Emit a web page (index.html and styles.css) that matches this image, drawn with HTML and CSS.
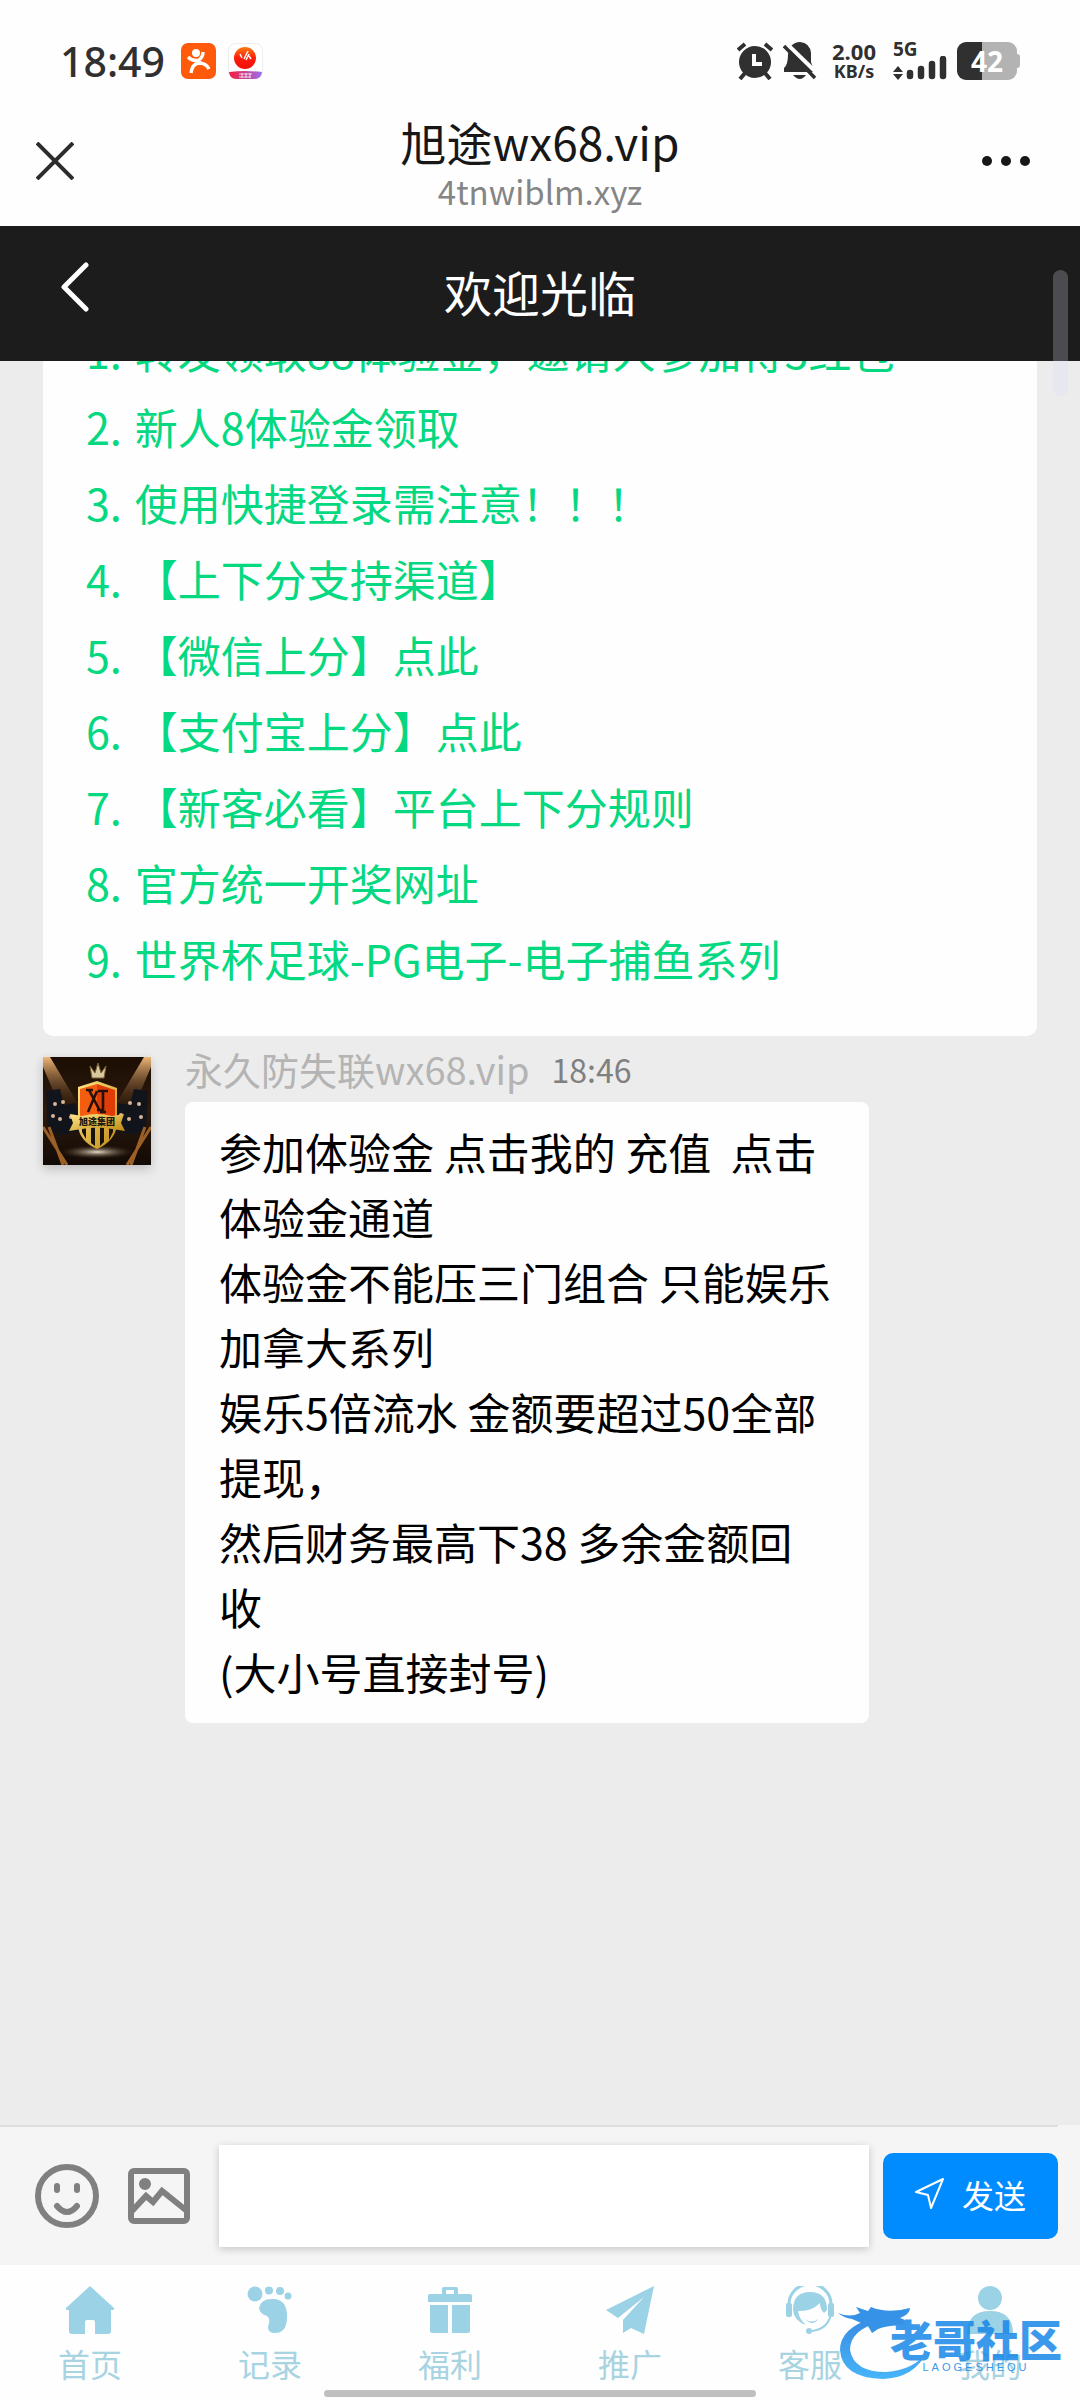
FILE: index.html
```html
<!DOCTYPE html>
<html lang="zh-CN">
<head>
<meta charset="utf-8">
<meta name="viewport" content="width=device-width, initial-scale=1">
<title>旭途wx68.vip</title>
<link rel="stylesheet" href="styles.css">
</head>
<body>
<div class="app">
  <div class="status">
    <time class="clock">18:49</time>
    <svg class="app-icon" viewBox="0 0 35 36" aria-hidden="true">
      <rect width="35" height="36" rx="7" fill="#ff5a0a"/>
      <circle cx="15" cy="10" r="4" fill="#fff"/>
      <path d="M7 14Q12 19 18 17Q22 14 22 9M14 17Q19 19 20 20M10 30Q11 21 18 20Q25 20 28 26" fill="none" stroke="#fff" stroke-width="3.4"/>
    </svg>
    <svg class="app-icon" viewBox="0 0 35 36" aria-hidden="true">
      <defs>
        <linearGradient id="ball" x1="0" y1="0" x2="0" y2="1"><stop offset="0" stop-color="#ff7a10"/><stop offset=".5" stop-color="#fb1c0c"/><stop offset="1" stop-color="#f01008"/></linearGradient>
        <linearGradient id="band"><stop offset="0" stop-color="#f51c3c"/><stop offset="1" stop-color="#9a70ee"/></linearGradient>
      </defs>
      <rect x=".5" y=".5" width="34" height="35" rx="7" fill="#fff" stroke="#ececf2"/>
      <circle cx="17" cy="15" r="11" fill="url(#ball)"/>
      <path d="M12 11l2 4M16 16l4-8M18 17l3-6M21 13l2 3" stroke="#fff" stroke-width="1.5"/>
      <path d="M1 29Q17 27 34 29Q33 36 27 36H8Q2 36 1 29z" fill="url(#band)"/>
      <path d="M11 31h13M11 34h12M14 30v5M18 30v5M22 30v5" stroke="#fff" stroke-opacity=".75"/>
    </svg>
    <div class="status-right">
      <svg class="alarm" viewBox="0 0 36 38" aria-hidden="true">
        <circle cx="18" cy="20" r="16" fill="#303030"/>
        <path d="M1 8l7-6M35 8l-7-6M8 31l-5 6M28 31l5 6" stroke="#303030" stroke-width="4"/>
        <path d="M17 12v10h8" fill="none" stroke="#fff" stroke-width="4"/>
      </svg>
      <svg class="bell" viewBox="0 0 34 38" aria-hidden="true">
        <path d="M8 4Q12 0 17 0Q27 1 28 11V20Q29 25 33 30H1V26Q5 23 5 12z" fill="#303030"/>
        <path d="M10 33h13q-6 8-13 0z" fill="#303030"/>
        <path d="M3 1L35 32" stroke="#fff" stroke-width="4"/>
        <path d="M1 4L32 36" stroke="#303030" stroke-width="3.5"/>
      </svg>
      <div class="speed"><span>2.00</span><span class="unit">KB/s</span></div>
      <div class="signal">
        <span>5G</span>
        <svg viewBox="0 0 54 24" aria-hidden="true">
          <path d="M0 16L5 10L10 16zM0 18L5 24L10 18z" fill="#303030"/>
          <path d="M17 17V20M28 13V20M39 8V20M50 3V20" stroke="#303030" stroke-width="6.5" stroke-linecap="round"/>
        </svg>
      </div>
      <div class="battery"><span>42</span></div>
    </div>
  </div>

  <header class="browser-bar">
    <button class="plain" aria-label="关闭"><svg width="38" height="38" viewBox="0 0 38 38"><path d="M1 1L37 37M37 1L1 37" stroke="#2c2c2c" stroke-width="4"/></svg></button>
    <div class="heading"><h1>旭途wx68.vip</h1><p>4tnwiblm.xyz</p></div>
    <button class="plain more" aria-label="更多"><svg width="48" height="10" viewBox="0 0 48 10" fill="#171717"><circle cx="5" cy="5" r="5"/><circle cx="24" cy="5" r="5"/><circle cx="43" cy="5" r="5"/></svg></button>
  </header>

  <div class="room-bar">
    <button class="plain" aria-label="返回"><svg width="30" height="50" viewBox="0 0 30 50"><path d="M26 3L4 25L26 47" fill="none" stroke="#fff" stroke-width="5" stroke-linecap="round" stroke-linejoin="round"/></svg></button>
    <h2>欢迎光临</h2>
    <i class="scroll-thumb"></i>
  </div>

  <main class="chat">
    <ul class="notices">
      <li><a href="#"><span>1.</span>转发领取88体验金，邀请人参加得3红包</a></li>
      <li><a href="#"><span>2.</span>新人8体验金领取</a></li>
      <li><a href="#"><span>3.</span>使用快捷登录需注意！！！</a></li>
      <li><a href="#"><span>4.</span>【上下分支持渠道】</a></li>
      <li><a href="#"><span>5.</span>【微信上分】点此</a></li>
      <li><a href="#"><span>6.</span>【支付宝上分】点此</a></li>
      <li><a href="#"><span>7.</span>【新客必看】平台上下分规则</a></li>
      <li><a href="#"><span>8.</span>官方统一开奖网址</a></li>
      <li><a href="#"><span>9.</span>世界杯足球-PG电子-电子捕鱼系列</a></li>
    </ul>
    <article class="message">
      <svg class="avatar" viewBox="0 0 108 108" role="img" aria-label="头像">
        <defs>
          <linearGradient id="beam" x1="0" y1="0" x2="0" y2="1"><stop offset="0" stop-color="#f0b878"/><stop offset="1" stop-color="#5a3418" stop-opacity="0"/></linearGradient>
          <radialGradient id="floor"><stop offset="0" stop-color="#e8dcc8"/><stop offset="1" stop-color="#3a2412" stop-opacity="0"/></radialGradient>
          <linearGradient id="bg" x1="0" y1="0" x2="0" y2="1"><stop offset="0" stop-color="#1c0e04"/><stop offset=".5" stop-color="#2c1a0c"/><stop offset="1" stop-color="#120a06"/></linearGradient>
          <linearGradient id="gold" x1="0" y1="0" x2="1" y2="1"><stop offset="0" stop-color="#ffe88a"/><stop offset="1" stop-color="#c08810"/></linearGradient>
        </defs>
        <rect width="108" height="108" fill="url(#bg)"/>
        <path d="M0 0H7L38 52H18L0 10zM108 0H101L70 52H90L108 10z" fill="url(#beam)"/>
        <path d="M3 34l14-2 4 16 12-2 4 28-20 4-12-6zM105 34l-14-2-4 16-12-2-4 28 20 4 12-6z" fill="#12141c"/>
        <path d="M0 70L24 108M6 70L20 108M108 70L84 108M102 70L88 108" stroke="#9c6026" stroke-width="3"/>
        <ellipse cx="54" cy="95" rx="38" ry="7" fill="url(#floor)"/>
        <g fill="#d8b496"><circle cx="12" cy="47" r="2"/><circle cx="20" cy="45" r="2"/><circle cx="10" cy="59" r="2"/><circle cx="17" cy="62" r="2"/><circle cx="28" cy="60" r="2"/><circle cx="96" cy="47" r="2"/><circle cx="87" cy="46" r="2"/><circle cx="98" cy="60" r="2"/><circle cx="86" cy="62" r="2"/><circle cx="78" cy="58" r="2"/></g>
        <path d="M49 21L47 9L52 16L55 6L58 16L63 9L61 21z" fill="#d8c8a0" stroke="#7c6230"/>
        <path d="M35 30L54 24L74 31V68Q72 84 54 92Q36 84 35 68z" fill="url(#gold)"/>
        <path d="M37 32L54 27V61H37z" fill="#f45c10"/><path d="M54 27L72 33V61H54z" fill="#e03c08"/>
        <path d="M46 33L57 54M54 34L45 55M43 33h7M54 53h5M55 34H65M60 34V55M57 55h6" fill="none" stroke="#28100a" stroke-width="2.6"/>
        <path d="M39 69h4v13l-4-7zM48 69h4v20l-4-3zM57 69h4v16l-4 4zM66 69h4v6l-4 8z" fill="#18120c"/>
        <path d="M27 57L39 59Q54 55 69 59L81 57L78 66L82 74L69 72Q54 69 39 72L26 74L30 66z" fill="url(#gold)"/>
        <text x="54" y="68" text-anchor="middle" class="avatar-text">旭途集团</text>
      </svg>
      <div class="message-body">
        <div class="meta"><span class="name">永久防失联wx68.vip</span><time>18:46</time></div>
        <p class="bubble">参加体验金 点击我的 充值&nbsp; 点击<br>体验金通道<br>体验金不能压三门组合 只能娱乐<br>加拿大系列<br>娱乐5倍流水 金额要超过50全部<br>提现，<br>然后财务最高下38 多余金额回<br>收<br>(大小号直接封号)</p>
      </div>
    </article>
  </main>

  <form class="composer">
    <button type="button" class="plain" aria-label="表情"><svg width="64" height="66" viewBox="0 0 64 66" fill="none" stroke="#808080" stroke-width="6"><circle cx="32" cy="33" r="29"/><path d="M22 23v4M42 23v4" stroke-linecap="round"/><path d="M22 43Q32 55 42 43" stroke-linecap="round"/></svg></button>
    <button type="button" class="plain picture" aria-label="图片"><svg width="62" height="56" viewBox="0 0 62 56" fill="none" stroke="#808080" stroke-width="6"><rect x="3" y="3" width="56" height="50" rx="3"/><circle cx="17" cy="16" r="3"/><path d="M4 43L18 28L25 34L34 23L59 43"/></svg></button>
    <input type="text" aria-label="输入消息">
    <button type="button" class="send"><svg width="30" height="32" viewBox="0 0 30 32"><path d="M1 14L28 1L16 30L13 17z" fill="none" stroke="#fff" stroke-width="2" stroke-linejoin="round"/></svg>发送</button>
  </form>

  <nav class="tabs">
    <a href="#"><svg viewBox="0 0 48 48"><path d="M24 0L48 22V24H45V45Q45 48 42 48H29V36Q29 34 27 34H21Q19 34 19 36V48H6Q3 48 3 45V24H0V22z"/></svg>首页</a>
    <a href="#"><svg viewBox="0 0 48 48"><circle cx="9" cy="8" r="7.5"/><circle cx="23" cy="4.500" r="4"/><circle cx="34" cy="5" r="4"/><circle cx="42" cy="10" r="3.500"/><path d="M13 22Q15 12 28 13Q42 14 41 33Q40 47 29 47Q22 47 22 41Q25 32 21 30Q13 27 13 22z"/></svg>记录</a>
    <a href="#"><svg viewBox="0 0 48 48"><path d="M16 8V3Q16 1 18 1H30Q32 1 32 3V8H44Q46 8 46 10V16H2V10Q2 8 4 8zM20 4V8H28V4zM4 19H22V47H6Q4 47 4 45zM26 19H44V45Q44 47 42 47H26z"/></svg>福利</a>
    <a href="#"><svg viewBox="0 0 48 48"><path d="M48 0L38 48L25 42L17 47V34L38 11L12 32L0 24z"/></svg>推广</a>
    <a href="#"><svg viewBox="0 0 48 48"><path d="M3 18A21 20 0 0 1 45 18" fill="none" stroke="currentColor" stroke-width="3"/><rect y="17" width="6" height="14" rx="2"/><rect x="42" y="17" width="6" height="14" rx="2"/><path d="M7 24Q7 6 24 6Q41 6 41 24L38 27Q34 23 34 17Q25 26 12 25Q13 33 20 39Q8 35 7 24z"/><path d="M19 33Q26 38 32 33Q27 41 19 33z"/><path d="M45 28Q42 43 26 45" fill="none" stroke="currentColor" stroke-width="2"/><circle cx="23" cy="45" r="3"/></svg>客服</a>
    <a href="#"><svg viewBox="0 0 48 48"><circle cx="24" cy="12" r="12"/><path d="M1 46Q2 25 24 25Q46 25 47 46V48H1z"/></svg>我的</a>
    <i class="home-bar"></i>
    <div class="watermark">
      <svg viewBox="0 0 100 80" aria-hidden="true">
        <defs><linearGradient id="ring" x1="0" y1="0" x2="0" y2="1"><stop offset="0" stop-color="#1878dc"/><stop offset="1" stop-color="#28a8f8"/></linearGradient></defs>
        <path d="M35 16Q2 26 2 48Q4 76 45 77Q76 76 89 50Q76 68 48 70Q16 70 12 48Q12 28 42 20z" fill="url(#ring)"/>
        <path d="M0 11Q12 16 22 11L18 5L30 9L33 5Q50 12 72 6Q72 12 62 16Q70 18 69 24Q52 22 40 27L34 31L30 24L14 17Q6 16 0 11z" fill="#1480e4"/>
      </svg>
      <div class="wm-words"><strong>老哥社区</strong><small>LAOGESHEQU</small></div>
    </div>
  </nav>
</div>
</body>
</html>
```
FILE: styles.css
```css
* { box-sizing: border-box; }
body {
  margin: 0;
  background: #ececec;
  font-family: "Noto Sans CJK SC", "Noto Sans", sans-serif;
}
h1, h2, p, ul { margin: 0; padding: 0; font-weight: 400; }
a { color: inherit; text-decoration: none; }
svg { display: block; flex: none; }
button { font-family: inherit; cursor: pointer; }
.plain { display: flex; flex: none; padding: 0; border: 0; background: none; }
.app { display: flex; flex-direction: column; min-height: 100vh; }

.status {
  display: flex;
  align-items: center;
  height: 122px;
  padding: 0 63px 0 60px;
  background: #fefefe;
  color: #303030;
}
.clock { margin-right: 16px; font: 500 41px/48px "Noto Sans", sans-serif; }
.app-icon { width: 35px; height: 36px; margin-right: 12px; }
.status-right { display: flex; align-items: center; height: 38px; margin-left: auto; }
.alarm { width: 36px; height: 38px; }
.bell { width: 34px; height: 38px; margin-left: 10px; }
.speed {
  display: flex;
  flex-direction: column;
  align-items: center;
  width: 48px;
  margin-left: 13px;
  font: 700 22px/20px "Noto Sans", sans-serif;
}
.unit { font-size: 18px; }
.signal { width: 54px; margin-left: 15px; font: 700 19px/14px "Noto Sans", sans-serif; }
.signal span { display: block; }
.signal svg { width: 54px; height: 24px; }
.battery {
  position: relative;
  width: 60px;
  height: 38px;
  margin-left: 10px;
  border-radius: 9px;
  background: linear-gradient(90deg, #303030 25px, #b3b3b3 25px);
  color: #fff;
  font: 700 28px/38px "Noto Sans", sans-serif;
  text-align: center;
}
.battery::after {
  content: "";
  position: absolute;
  left: 100%;
  top: 12px;
  width: 3px;
  height: 14px;
  border-radius: 0 3px 3px 0;
  background: #b3b3b3;
}

.browser-bar {
  display: flex;
  align-items: center;
  height: 104px;
  padding: 0 50px 26px 36px;
  background: #fefefe;
}
.heading { flex: 1; padding: 8px 0 0 24px; text-align: center; }
.heading h1 { color: #171717; font-size: 46px; line-height: 52px; }
.heading p { color: #858585; font-size: 33px; line-height: 48px; }

.room-bar {
  position: relative;
  z-index: 1;
  display: flex;
  align-items: center;
  height: 135px;
  padding: 0 90px 14px 60px;
  background: #1c1c1c;
  color: #fff;
}
.room-bar h2 { flex: 1; padding-top: 8px; font-size: 48px; line-height: 60px; text-align: center; }
.scroll-thumb {
  position: absolute;
  right: 12px;
  top: 44px;
  width: 15px;
  height: 126px;
  border-radius: 8px;
  background: linear-gradient(#4c4c50 91px, #e7e7ef 91px);
}

.chat { flex: 1; overflow: hidden; padding: 0 43px; }
.notices {
  margin-top: -49px;
  padding: 0 43px 40px;
  border-radius: 10px;
  background: #fefefe;
  color: #04d880;
  font-size: 43px;
  line-height: 76px;
  list-style: none;
}
.notices a { display: flex; gap: 13px; }
.message { display: flex; gap: 34px; margin-top: 14px; }
.avatar { width: 108px; height: 108px; margin-top: 7px; box-shadow: 0 4px 10px #0003; }
.avatar-text { font-size: 9px; font-weight: 900; fill: #20180c; }
.meta { display: flex; align-items: center; gap: 22px; height: 52px; padding-bottom: 14px; line-height: 38px; }
.name { color: #b4b4b4; font-size: 38px; }
.meta time { color: #808080; font-size: 32px; }
.bubble {
  width: 684px;
  max-width: 100%;
  padding: 17px 34px 19px;
  border-radius: 8px;
  background: #fefefe;
  color: #000;
  font-size: 43px;
  line-height: 65px;
}

.composer {
  display: flex;
  align-items: center;
  height: 140px;
  padding: 2px 22px 0 35px;
  background: linear-gradient(90deg, #dedede calc(100% - 22px), #f5f5f5 0) top / 100% 2px no-repeat #f5f5f5;
}
.picture { margin: 0 29px; }
.composer input {
  flex: 1;
  min-width: 0;
  height: 102px;
  padding: 0 20px;
  border: 0;
  background: #fff;
  box-shadow: 0 2px 8px #0003;
  font-size: 43px;
}
.send {
  display: flex;
  align-items: center;
  justify-content: center;
  gap: 17px;
  width: 175px;
  height: 86px;
  margin-left: 14px;
  padding: 0 6px 4px;
  border: 0;
  border-radius: 10px;
  background: #008cff;
  color: #fff;
  font-size: 32px;
}

.tabs {
  position: relative;
  display: grid;
  grid-template-columns: repeat(6, 1fr);
  height: 135px;
  padding-top: 21px;
  background: #fefefe;
  color: #a8d4e2;
  font-size: 32px;
  line-height: 40px;
}
.tabs a { display: flex; flex-direction: column; align-items: center; gap: 9px; }
.tabs a svg { width: 48px; height: 48px; color: #9cd2e6; fill: currentColor; fill-rule: evenodd; }
.home-bar {
  position: absolute;
  left: 30%;
  right: 30%;
  bottom: 3px;
  height: 7px;
  border-radius: 4px;
  background: #c0c0c0;
}
.watermark { position: absolute; right: 18px; bottom: 18px; width: 224px; height: 80px; opacity: .85; pointer-events: none; }
.watermark svg { width: 100px; height: 80px; }
.wm-words { position: absolute; right: 0; top: 14px; display: flex; flex-direction: column; align-items: center; color: #1888e8; }
.wm-words strong { font-size: 43px; font-weight: 900; line-height: 44px; }
.wm-words small { font: 400 11px/14px "Liberation Sans", sans-serif; letter-spacing: 3px; }
```
